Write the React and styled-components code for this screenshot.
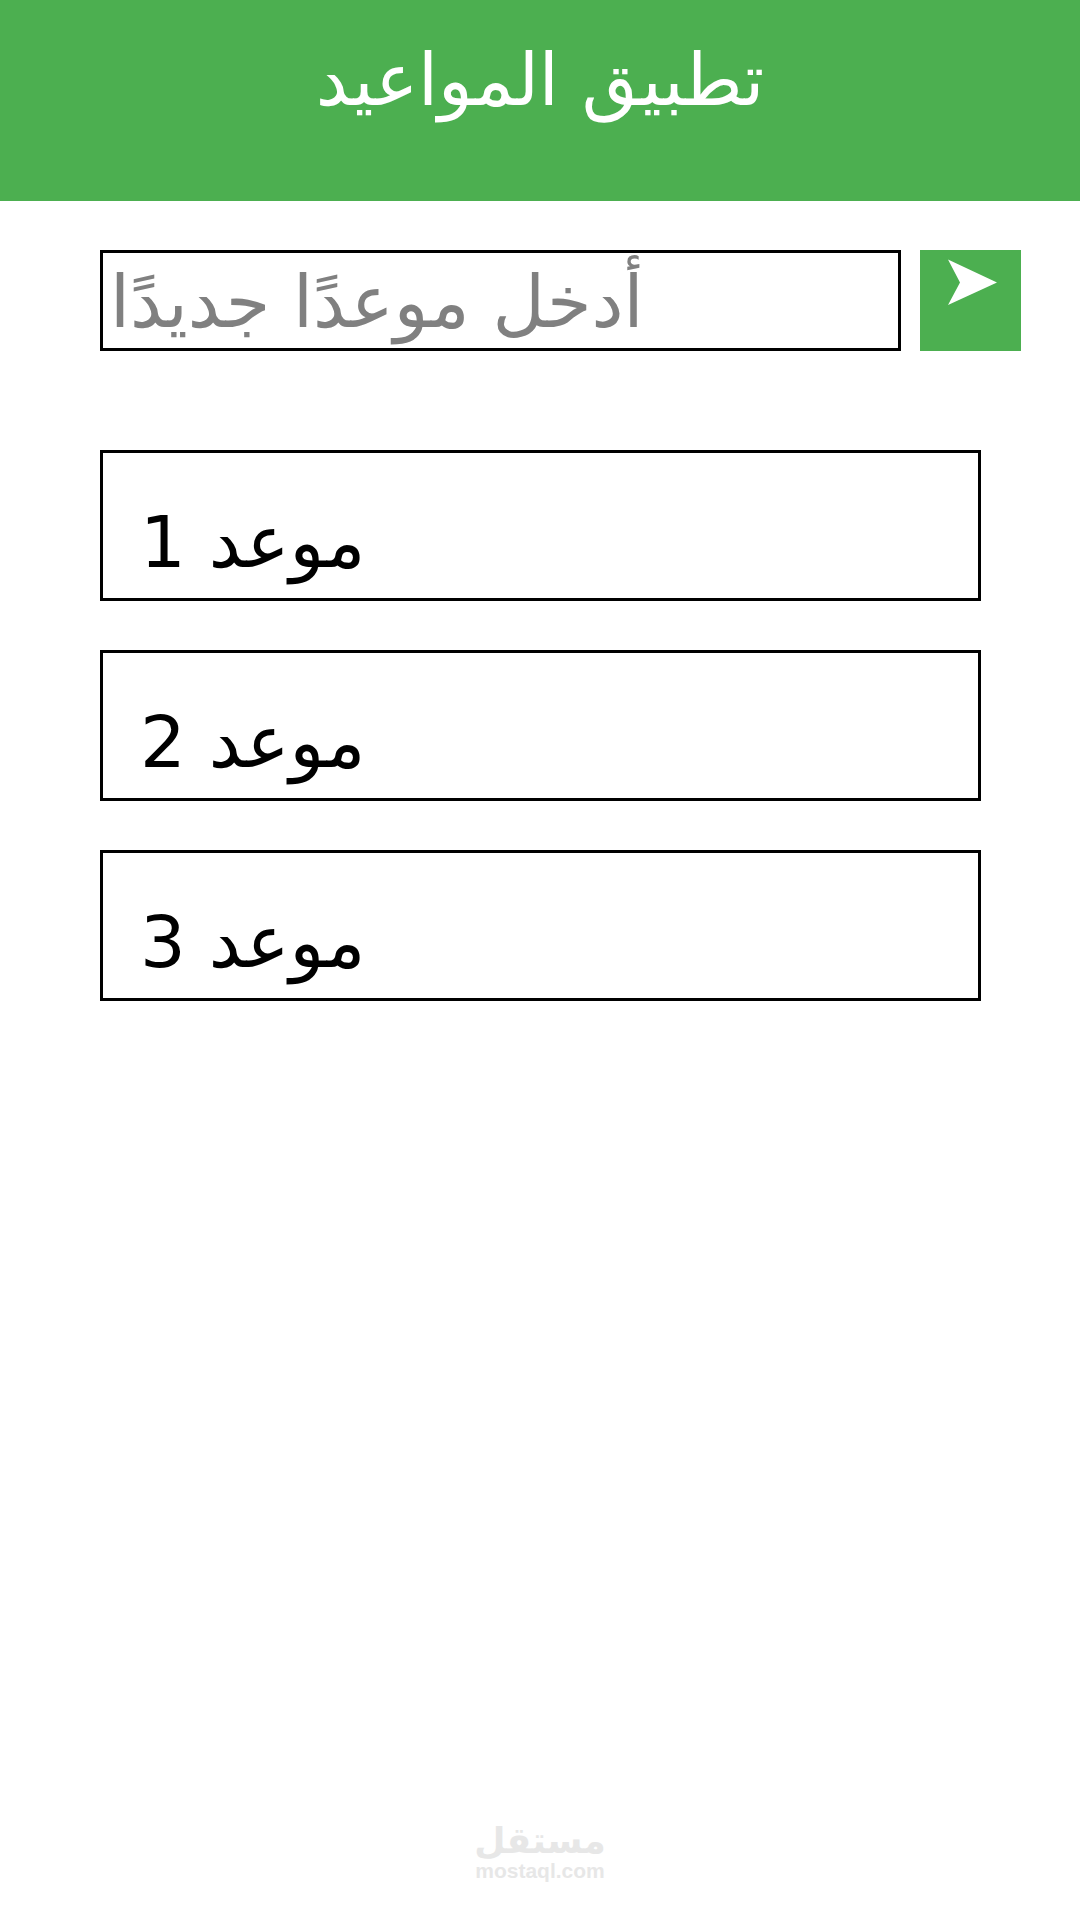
import { useState } from 'react';
import styled, { createGlobalStyle } from 'styled-components';

const GlobalStyle = createGlobalStyle`
    :root {
        --accent-color: #4caf50;
        --page-color: white;
        --placeholder-color: #808080;
        --brand-color: #e7e7e7;
    }

    * {
        box-sizing: border-box;
    }

    body {
        margin: 0;
        background-color: var(--page-color);
        color: black;
        font-family: "DejaVu Sans", sans-serif;
        font-size: 72px;
        line-height: 84px;
    }
`

const Page = styled.div`
    display: flex;
    flex-direction: column;
    min-height: 100vh;
`

const Header = styled.header`
    padding: 38px 20px 79px;
    background-color: var(--accent-color);
    color: white;
    text-align: center;
`

const Title = styled.h1`
    margin: 0;
    font-size: inherit;
    font-weight: normal;
`

const EntryForm = styled.form`
    display: flex;
    gap: 19px;
    padding: 49px 59px 0 100px;
`

/* a one-row textarea, so that the marks above the letters are not cut off */
const EntryInput = styled.textarea`
    flex: 1;
    min-width: 0;
    height: 101px;
    padding: 0 7px;
    border: 3px solid black;
    border-radius: 0;
    background-color: var(--page-color);
    color: black;
    font: inherit;
    line-height: 99px;
    text-align: left;
    white-space: nowrap;
    overflow: hidden;
    resize: none;
    outline: none;

    &::placeholder {
        color: var(--placeholder-color);
        opacity: 1;
    }
`

const SendButton = styled.button`
    flex: none;
    width: 101px;
    height: 101px;
    padding: 0;
    border: none;
    background-color: var(--accent-color);
    cursor: pointer;

    & > svg {
        display: block;
    }
`

const List = styled.ul`
    display: flex;
    flex-direction: column;
    gap: 49px;
    margin: 0;
    padding: 99px 99px 49px 100px;
    list-style: none;
`

const Item = styled.li`
    padding: 47px 37px 14px;
    border: 3px solid black;
    text-align: left;
`

const Brand = styled.footer`
    display: flex;
    flex-direction: column;
    align-items: center;
    margin-top: auto;
    padding-bottom: 37px;
    color: var(--brand-color);
    font-weight: bold;
`

const BrandName = styled.span`
    font-size: 36px;
    line-height: 36px;
`

const BrandSite = styled.span`
    font-family: "Liberation Sans", sans-serif;
    font-size: 21px;
    line-height: 24px;
`

const SendIcon = () => (
    <svg width="101" height="101" viewBox="0 0 101 101" aria-hidden="true">
        <path d="M28 9.5L77 32.5L28 55L40 32.5Z" fill="white" />
    </svg>
);

const App = () => {
    const [items, setItems] = useState(['موعد 1', 'موعد 2', 'موعد 3']);
    const [text, setText] = useState('');

    const addItem = (e) => {
        e.preventDefault();
        if (!text.trim()) return;
        setItems([...items, text.trim()]);
        setText('');
    };

    const handleKeyDown = (e) => {
        if (e.key === 'Enter') addItem(e);
    };

    return (
        <Page lang="ar">
            <GlobalStyle />
            <Header>
                <Title dir="rtl">تطبيق المواعيد</Title>
            </Header>
            <EntryForm onSubmit={addItem}>
                <EntryInput
                    dir="rtl"
                    rows={1}
                    aria-label="أدخل موعدًا جديدًا"
                    placeholder="أدخل موعدًا جديدًا"
                    value={text}
                    onChange={(e) => setText(e.target.value)}
                    onKeyDown={handleKeyDown}
                />
                <SendButton type="submit" aria-label="إضافة">
                    <SendIcon />
                </SendButton>
            </EntryForm>
            <List>
                {items.map((item, i) => <Item key={i} dir="rtl">{item}</Item>)}
            </List>
            <Brand>
                <BrandName dir="rtl">مستقل</BrandName>
                <BrandSite>mostaql.com</BrandSite>
            </Brand>
        </Page>
    );
}

export default App;
